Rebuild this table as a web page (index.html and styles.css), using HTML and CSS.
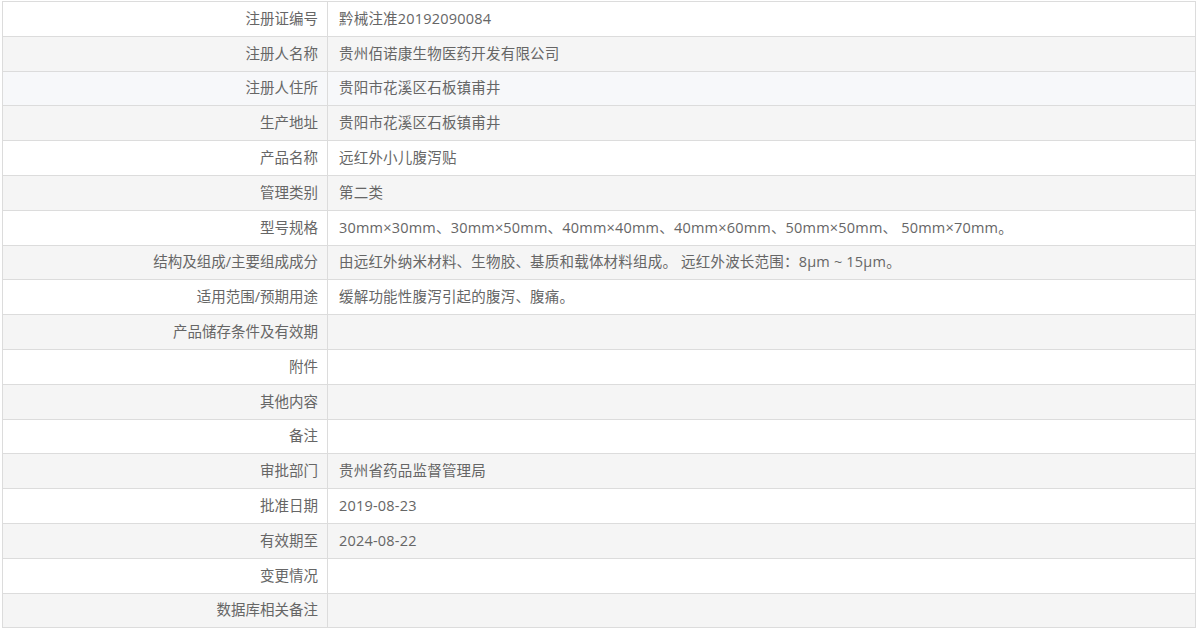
FILE: index.html
```html
<!DOCTYPE html>
<html lang="zh-CN">
<head>
<meta charset="utf-8">
<title>注册证信息</title>
<link rel="stylesheet" href="styles.css">
</head>
<body>
<div class="wrap">
<table class="info">
<tbody>
<tr><td class="k">注册证编号</td><td class="v">黔械注准20192090084</td></tr>
<tr><td class="k">注册人名称</td><td class="v">贵州佰诺康生物医药开发有限公司</td></tr>
<tr class="hover"><td class="k">注册人住所</td><td class="v">贵阳市花溪区石板镇甫井</td></tr>
<tr><td class="k">生产地址</td><td class="v">贵阳市花溪区石板镇甫井</td></tr>
<tr><td class="k">产品名称</td><td class="v">远红外小儿腹泻贴</td></tr>
<tr><td class="k">管理类别</td><td class="v">第二类</td></tr>
<tr><td class="k">型号规格</td><td class="v">30mm×30mm、30mm×50mm、40mm×40mm、40mm×60mm、50mm×50mm、 50mm×70mm。</td></tr>
<tr><td class="k">结构及组成/主要组成成分</td><td class="v">由远红外纳米材料、生物胶、基质和载体材料组成。 远红外波长范围：8μm ~ 15μm。</td></tr>
<tr><td class="k">适用范围/预期用途</td><td class="v">缓解功能性腹泻引起的腹泻、腹痛。</td></tr>
<tr><td class="k">产品储存条件及有效期</td><td class="v"></td></tr>
<tr><td class="k">附件</td><td class="v"></td></tr>
<tr><td class="k">其他内容</td><td class="v"></td></tr>
<tr><td class="k">备注</td><td class="v"></td></tr>
<tr><td class="k">审批部门</td><td class="v">贵州省药品监督管理局</td></tr>
<tr><td class="k">批准日期</td><td class="v">2019-08-23</td></tr>
<tr><td class="k">有效期至</td><td class="v">2024-08-22</td></tr>
<tr><td class="k">变更情况</td><td class="v"></td></tr>
<tr><td class="k">数据库相关备注</td><td class="v"></td></tr>
</tbody>
</table>
</div>
</body>
</html>
```
FILE: styles.css
```css
html, body {
  margin: 0;
  padding: 0;
  background: #fff;
}
.wrap {
  padding: 1px 4px 0 2px;
}
.info {
  width: 100%;
  border-collapse: collapse;
  font-family: "Open Sans", "Noto Sans CJK SC", sans-serif;
  font-size: 14.5px;
  color: #666;
  table-layout: fixed;
}
.info td {
  border: 1px solid #dcdcdc;
  height: 34.8px;
  padding: 0;
  box-sizing: border-box;
  line-height: 20px;
  white-space: nowrap;
}
.info tr:nth-child(odd) {
  background: #fff;
}
.info tr:nth-child(even) {
  background: #f5f5f5;
}
.info tr.hover {
  background: #f7f8fa;
}
.info .k {
  width: 325px;
  text-align: right;
  padding-right: 9px;
}
.info .v {
  text-align: left;
  padding-left: 11px;
  letter-spacing: 0.2px;
}
```
